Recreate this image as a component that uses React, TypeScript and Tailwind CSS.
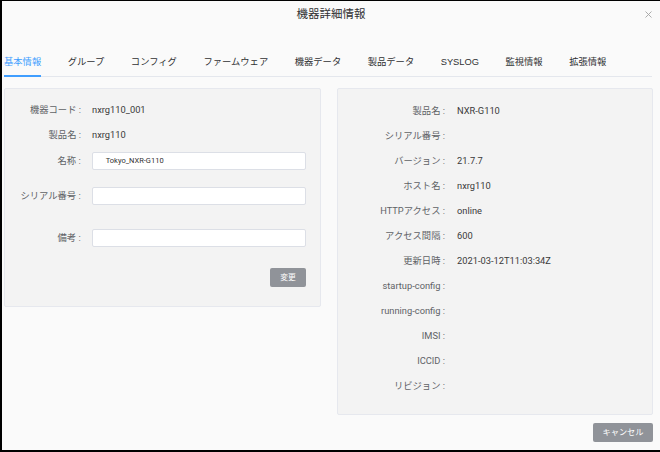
import React from 'react';

const tabs = ['基本情報', 'グループ', 'コンフィグ', 'ファームウェア', '機器データ', '製品データ', 'SYSLOG', '監視情報', '拡張情報'];

const deviceInfo: [string, string][] = [
  ['製品名', 'NXR-G110'],
  ['シリアル番号', ''],
  ['バージョン', '21.7.7'],
  ['ホスト名', 'nxrg110'],
  ['HTTPアクセス', 'online'],
  ['アクセス間隔', '600'],
  ['更新日時', '2021-03-12T11:03:34Z'],
  ['startup-config', ''],
  ['running-config', ''],
  ['IMSI', ''],
  ['ICCID', ''],
  ['リビジョン', ''],
];

const TextInput = ({ value }: { value?: string }) => (
  <div className="ml-[11px] flex h-[18px] w-[215px] items-center rounded-[2px] border border-[#dcdfe6] bg-white pl-[13px] text-[7.5px] text-[#333]">
    {value}
  </div>
);

const App: React.FC = () => {
  return (
    <div className="flex h-[452px] w-[660px] flex-col border-t border-b-2 border-l-2 border-black bg-[#fafafa] font-['Roboto','Noto_Sans_CJK_JP',sans-serif] text-[9.3px] text-[#3a3a3a]">
      {/* header */}
      <div className="relative flex h-[28px] items-center justify-center text-[11.5px] text-[#303133]">
        機器詳細情報
        <svg className="absolute right-[8px] top-[10px]" width="7" height="7" viewBox="0 0 7 7">
          <path d="M0.5 0.5 L6.5 6.5 M6.5 0.5 L0.5 6.5" stroke="#a3a3a3" strokeWidth="0.9" />
        </svg>
      </div>

      {/* tabs */}
      <div className="mt-[20px] ml-[2px] mr-[8px] flex gap-[26.5px] border-b border-[#e4e7ed] font-['Liberation_Sans','Noto_Sans_CJK_JP',sans-serif]">
        {tabs.map((t, i) => (
          <div
            key={t}
            className={`relative flex h-[27px] items-center ${i === 0 ? 'text-[#409eff]' : 'text-[#303133]'}`}
          >
            {t}
            {i === 0 && <div className="absolute bottom-[-1px] left-0 right-0 h-[2px] bg-[#409eff]" />}
          </div>
        ))}
      </div>

      {/* panels */}
      <div className="mt-[11px] ml-[2px] flex items-start gap-[16px]">
        <div className="w-[317px] rounded-[2px] border border-[#e6e8ee] bg-[#f3f3f3] pt-[8px] pb-[19px] pr-[14px]">
          <div className="flex h-[25px] items-center">
            <div className="w-[76px] text-right text-[#606266]">機器コード :</div>
            <div className="ml-[11px]">nxrg110_001</div>
          </div>
          <div className="flex h-[25px] items-center">
            <div className="w-[76px] text-right text-[#606266]">製品名 :</div>
            <div className="ml-[11px]">nxrg110</div>
          </div>
          <div className="mt-[5px] flex items-center">
            <div className="w-[76px] text-right text-[#606266]">名称 :</div>
            <TextInput value="Tokyo_NXR-G110" />
          </div>
          <div className="mt-[17px] flex items-center">
            <div className="w-[76px] text-right text-[#606266]">シリアル番号 :</div>
            <TextInput />
          </div>
          <div className="mt-[24px] flex items-center">
            <div className="w-[76px] text-right text-[#606266]">備考 :</div>
            <TextInput />
          </div>
          <div className="mt-[21px] flex justify-end">
            <button className="flex h-[19px] w-[36px] items-center justify-center rounded-[2px] bg-[#909399] text-[7.8px] text-white">
              変更
            </button>
          </div>
        </div>

        <div className="h-[327px] w-[316px] rounded-[2px] border border-[#e6e8ee] bg-[#f3f3f3] pt-[9px]">
          {deviceInfo.map(([label, value]) => (
            <div key={label} className="flex h-[25px] items-center">
              <div className="w-[107px] text-right text-[#606266]">{label} :</div>
              <div className="ml-[12px]">{value}</div>
            </div>
          ))}
        </div>
      </div>

      {/* footer */}
      <div className="mt-[8px] mr-[7px] flex justify-end">
        <button className="flex h-[19px] w-[60px] items-center justify-center rounded-[2px] bg-[#909399] text-[8.2px] text-white">
          キャンセル
        </button>
      </div>
    </div>
  );
};

export default App;
